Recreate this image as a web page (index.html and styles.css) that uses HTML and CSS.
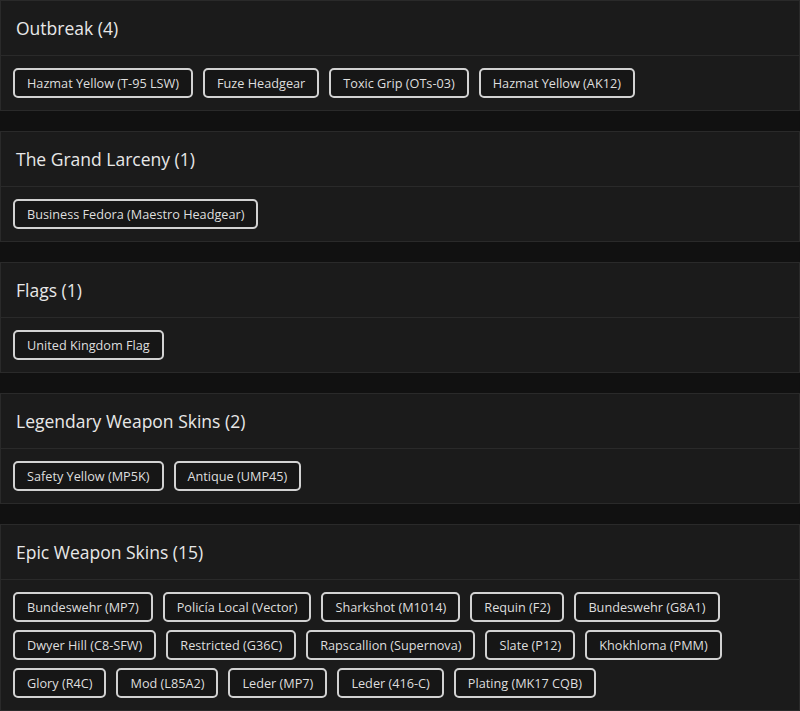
FILE: index.html
```html
<!DOCTYPE html>
<html>
<head>
<meta charset="utf-8">
<link rel="stylesheet" href="styles.css">
</head>
<body>
<div class="list">
  <section class="card">
    <div class="card-head">Outbreak (4)</div>
    <div class="card-body">
      <span class="chip">Hazmat Yellow (T-95 LSW)</span>
      <span class="chip">Fuze Headgear</span>
      <span class="chip">Toxic Grip (OTs-03)</span>
      <span class="chip">Hazmat Yellow (AK12)</span>
    </div>
  </section>
  <section class="card">
    <div class="card-head">The Grand Larceny (1)</div>
    <div class="card-body">
      <span class="chip">Business Fedora (Maestro Headgear)</span>
    </div>
  </section>
  <section class="card">
    <div class="card-head">Flags (1)</div>
    <div class="card-body">
      <span class="chip">United Kingdom Flag</span>
    </div>
  </section>
  <section class="card">
    <div class="card-head">Legendary Weapon Skins (2)</div>
    <div class="card-body">
      <span class="chip">Safety Yellow (MP5K)</span>
      <span class="chip">Antique (UMP45)</span>
    </div>
  </section>
  <section class="card">
    <div class="card-head">Epic Weapon Skins (15)</div>
    <div class="card-body">
      <span class="chip">Bundeswehr (MP7)</span>
      <span class="chip">Policía Local (Vector)</span>
      <span class="chip">Sharkshot (M1014)</span>
      <span class="chip">Requin (F2)</span>
      <span class="chip">Bundeswehr (G8A1)</span>
      <span class="chip">Dwyer Hill (C8-SFW)</span>
      <span class="chip">Restricted (G36C)</span>
      <span class="chip">Rapscallion (Supernova)</span>
      <span class="chip">Slate (P12)</span>
      <span class="chip">Khokhloma (PMM)</span>
      <span class="chip">Glory (R4C)</span>
      <span class="chip">Mod (L85A2)</span>
      <span class="chip">Leder (MP7)</span>
      <span class="chip">Leder (416-C)</span>
      <span class="chip">Plating (MK17 CQB)</span>
    </div>
  </section>
</div>
</body>
</html>
```
FILE: styles.css
```css
html, body {
  margin: 0;
  padding: 0;
  background: #111111;
  font-family: "Open Sans", "DejaVu Sans", sans-serif;
  color: #e2e2e2;
}
.list {
  display: flex;
  flex-direction: column;
  gap: 20px;
}
.card {
  background: #1b1b1b;
  border: 1px solid #2a2a2a;
}
.card-head {
  height: 55px;
  box-sizing: border-box;
  padding: 0 15px;
  display: flex;
  align-items: center;
  font-size: 17.5px;
  font-weight: 500;
  color: #e8e8e8;
  border-bottom: 1px solid #2a2a2a;
}
.card-body {
  display: flex;
  flex-wrap: wrap;
  gap: 8px 10px;
  padding: 12px;
}
.chip {
  display: inline-block;
  box-sizing: border-box;
  height: 30px;
  line-height: 26px;
  padding: 0 12px;
  border: 2px solid #d2d2d2;
  border-radius: 5px;
  background: #161616;
  font-size: 12.7px;
  color: #dedede;
  white-space: nowrap;
}
```
